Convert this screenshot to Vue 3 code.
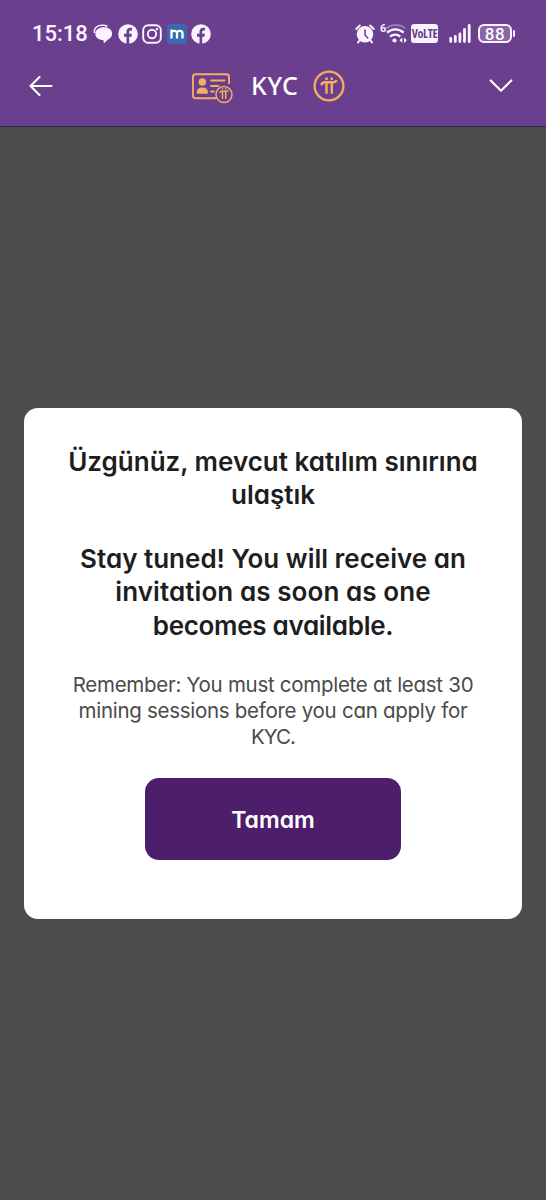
<script setup>
const title = [
  { text: 'Üzgünüz, mevcut katılım sınırına', fit: 'l1' },
  { text: 'ulaştık', fit: 'l2' },
]
const notice = [
  { text: 'Stay tuned! You will receive an', fit: 'l3' },
  { text: 'invitation as soon as one', fit: 'l4' },
  { text: 'becomes available.', fit: 'l5' },
]
const hint = [
  { text: 'Remember: You must complete at least 30', fit: 'l6' },
  { text: 'mining sessions before you can apply for', fit: 'l7' },
  { text: 'KYC.', fit: 'l8' },
]
</script>

<template>
  <div class="screen">
    <header class="top">
      <div class="status">
        <span class="time">15:18</span>
        <div class="notifs">
          <svg width="20" height="20" viewBox="0 0 20 20">
            <path d="M1.600 9C.3 4.500 4 1.500 8.500 1.300c2.500-.1 4.500.3 6 1.200" fill="none" stroke="#fbf3ff" stroke-width="1.500" />
            <path d="M10.800 3.300c4.800 0 8.300 2.700 8.300 6.400 0 2.600-1.600 4.600-4.100 5.700L11 19.300l-.8-3.300C5.600 15.900 2.300 13.400 2.300 9.700 2.300 6 6.100 3.300 10.800 3.300z" fill="#fbf3ff" />
          </svg>
          <svg width="20" height="20" viewBox="0 0 20 20">
            <circle cx="10" cy="10" r="9.800" fill="#fbf3ff" />
            <path d="M8.500 20v-7.300H6V9.800h2.500V7.700c0-2.600 1.500-3.900 3.800-3.900.8 0 1.700.2 1.700.2v2.400h-1.200c-1.200 0-1.600.7-1.600 1.500v1.900h2.700l-.4 2.900h-2.300V20z" fill="#6a3f8d" />
          </svg>
          <svg width="20" height="20" viewBox="0 0 20 20">
            <rect x="1.200" y="1.200" width="17.600" height="17.600" rx="5" fill="none" stroke="#fbf3ff" stroke-width="1.900" />
            <circle cx="10" cy="10" r="4.200" fill="none" stroke="#fbf3ff" stroke-width="1.900" />
            <circle cx="15" cy="5" r="1.200" fill="#fbf3ff" />
          </svg>
          <svg width="20" height="20" viewBox="0 0 20 20">
            <rect width="20" height="20" rx="3.500" fill="#3b69ad" />
            <path d="M4.500 14.500V5.500M4.500 9c0-3 5.500-3 5.500.3v5.200M10 9c0-3 5.500-3 5.500.3v5.200" fill="none" stroke="#fff" stroke-width="2.300" />
          </svg>
          <svg width="20" height="20" viewBox="0 0 20 20">
            <circle cx="10" cy="10" r="9.800" fill="#fbf3ff" />
            <path d="M8.500 20v-7.300H6V9.800h2.500V7.700c0-2.600 1.500-3.900 3.800-3.900.8 0 1.700.2 1.700.2v2.400h-1.200c-1.200 0-1.600.7-1.600 1.500v1.900h2.700l-.4 2.900h-2.300V20z" fill="#6a3f8d" />
          </svg>
        </div>
        <div class="system">
          <svg class="alarm" width="20" height="20" viewBox="0 0 20 20">
            <circle cx="10" cy="10.300" r="8.300" fill="#fbf3ff" />
            <path d="M1.300 5L4.800 1.500M18.700 5L15.200 1.500" stroke="#fbf3ff" stroke-width="2" stroke-linecap="round" />
            <path d="M4.500 16.500L3 18.500M15.500 16.500L17 18.500" stroke="#fbf3ff" stroke-width="2" stroke-linecap="round" />
            <path d="M10 6v5l2.800 3" fill="none" stroke="#6a3f8d" stroke-width="1.500" stroke-linecap="round" />
          </svg>
          <svg class="wifi" width="27" height="22" viewBox="0 0 27 22">
            <text x="0" y="9.500" class="gen">6</text>
            <path d="M6.500 6.300C11.500 1.800 20 1.800 25.300 6.300" fill="none" stroke="#a077be" stroke-width="2.100" />
            <path d="M7 10.600C12 6.300 19 6.300 23.600 10.600" fill="none" stroke="#fbf3ff" stroke-width="2.300" />
            <path d="M10 14.700C13 12 17.500 12 20.300 14.700" fill="none" stroke="#fbf3ff" stroke-width="2.300" />
            <circle cx="14.500" cy="18.500" r="2.100" fill="#fbf3ff" />
            <path d="M22.300 15.500v5.400l-2.800-2.700zM24 15.500v5.400l2.800-2.700z" fill="#fbf3ff" />
          </svg>
          <span class="volte">VoLTE</span>
          <svg class="signal" width="22" height="19" viewBox="0 0 22 19">
            <path d="M1.700 17.500v-3M6.300 17.500v-5M10.900 17.500v-7.500M15.500 17.500V5.500M20.200 17.500V1.500" stroke="#fbf3ff" stroke-width="2.800" stroke-linecap="round" />
          </svg>
          <span class="battery">88</span>
          <span class="nub"></span>
        </div>
      </div>
      <nav class="bar">
        <svg class="back" width="24" height="20" viewBox="0 0 24 20">
          <path d="M22.500 10H1.500M10.500 1L1.500 10l9 9" fill="none" stroke="#fff" stroke-width="2.100" stroke-linecap="round" stroke-linejoin="round" />
        </svg>
        <svg class="card-icon" width="42" height="32" viewBox="0 0 42 32">
          <g fill="none" stroke="#f2ae62" stroke-width="1.900">
            <path d="M24 26.300H3.500a2.500 2.500 0 0 1-2.500-2.500v-19A2.500 2.500 0 0 1 3.500 2.300h31a2.500 2.500 0 0 1 2.500 2.500V12" />
            <path d="M19 8.500h13.500M19 14h7.500M19 19.500h3" stroke-linecap="round" stroke-width="1.800" />
            <circle cx="32" cy="22.500" r="8" stroke-width="1.500" />
            <path d="M27.700 20.700c.4-1.500 1-1.500 2-1.500h5.200c1 0 1.200-.3 1.500-1M30.500 19.500v7.500M33.700 19.500v7.500M30.500 16.300v1.200M33.700 16.300v1.200" stroke-width="1.500" />
          </g>
          <circle cx="10.300" cy="10" r="3.800" fill="#f2ae62" />
          <path d="M4.800 21.800v-2.200c0-2.500 2-4.200 5.500-4.200s5.500 1.700 5.500 4.200v2.200z" fill="#f2ae62" />
        </svg>
        <h1 class="heading">KYC</h1>
        <svg class="coin" width="32" height="32" viewBox="0 0 32 32">
          <circle cx="16" cy="16" r="14.400" fill="none" stroke="#f2ae62" stroke-width="2.300" />
          <path d="M8.500 15.300c.3-2.500 1.500-3 3.200-3h8.600c1.600 0 2.600-.5 3.200-2.200M13.500 12.500v11.200M18.800 12.500v11.200" fill="none" stroke="#f2ae62" stroke-width="2.500" />
          <path d="M12.300 7.500h2.500v2.400h-2.500zM17.500 7.500H20v2.400h-2.500z" fill="#f2ae62" />
        </svg>
        <svg class="chevron" width="24" height="14" viewBox="0 0 24 14">
          <path d="M1.700 1.500L12 11.700 22.300 1.500" fill="none" stroke="#fff" stroke-width="2.200" stroke-linecap="round" stroke-linejoin="round" />
        </svg>
      </nav>
    </header>
    <main class="overlay">
      <section class="modal">
        <h2 class="strong"><span v-for="l in title" :key="l.fit" :class="l.fit">{{ l.text }}</span></h2>
        <h2 class="strong second"><span v-for="l in notice" :key="l.fit" :class="l.fit">{{ l.text }}</span></h2>
        <p class="hint"><span v-for="l in hint" :key="l.fit" :class="l.fit">{{ l.text }}</span></p>
        <button class="ok">Tamam</button>
      </section>
    </main>
  </div>
</template>

<style>
body { margin: 0; background: #4c4c4c; }
</style>

<style scoped>
.screen { width: 546px; height: 1200px; display: flex; flex-direction: column; background: #4c4c4c; overflow: hidden; }
svg { display: block; flex: none; }
.top { height: 127px; box-sizing: border-box; background: #6a3f8d; border-bottom: 1px solid #38234a; flex: none; }
.status { display: flex; height: 58px; padding: 10px 30px 0 32px; box-sizing: border-box; align-items: center; }
.time { width: 61px; font: 500 22px/22px Roboto, sans-serif; color: #fbf3ff; letter-spacing: 0; }
.notifs { display: flex; gap: 4.600px; margin-top: -1px; }
.system { display: flex; align-items: center; margin-left: auto; margin-top: -1px; }
.wifi { margin-left: 5px; margin-top: -1px; }
.gen { font: 700 11px Roboto, sans-serif; fill: #fbf3ff; }
.volte { margin-left: 4px; width: 27px; height: 19px; border-radius: 3px; background: #fbf3ff; color: #6a3f8d; font: 700 12px/19px "Open Sans", sans-serif; font-stretch: 75%; letter-spacing: -0.3px; text-align: center; }
.signal { margin-left: 11px; }
.battery { margin-left: 7px; width: 34px; height: 19px; box-sizing: border-box; border: 2px solid #fbf3ff; border-radius: 6px; background: #8a65a8; color: #fff; font: 500 17px/16px Roboto, sans-serif; text-align: center; letter-spacing: 0.5px; }
.nub { width: 2px; height: 7px; margin-left: 1px; margin-right: 1px; background: #fbf3ff; border-radius: 1px; }
.bar { display: flex; align-items: center; height: 56px; padding: 0 33px 0 29px; }
.card-icon { margin-left: 139px; margin-top: 3px; }
.heading { margin: -3px 0 0 17px; width: 61.500px; font: 500 25px/30px "Noto Sans", sans-serif; letter-spacing: 0.600px; color: #fff; }
.chevron { margin-left: auto; }
.overlay { flex: 1; display: flex; flex-direction: column; align-items: center; padding-top: 281px; }
.modal { width: 498px; height: 511px; box-sizing: border-box; padding: 36.800px 0 0; border-radius: 14px; background: #fff; display: flex; flex-direction: column; align-items: center; font-family: Inter, sans-serif; font-feature-settings: "cv11"; }
.strong, .hint { margin: 0; display: flex; flex-direction: column; align-items: center; white-space: nowrap; }
.strong { font-size: 26px; line-height: 33.500px; font-weight: 600; color: #1e1e1e; }
.second { margin-top: 30px; }
.l4 { letter-spacing: 0.080px; }
.l5 { letter-spacing: -0.300px; }
.hint { margin-top: 29.500px; font-size: 20.500px; line-height: 26px; font-weight: 400; color: #4a4a4a; letter-spacing: -0.280px; }
.l8 { letter-spacing: -1px; }
.ok { margin-top: 28.200px; width: 256px; height: 82px; padding: 2px 0 0; border: 0; border-radius: 14px; background: #4d1e6c; color: #fff; font: 600 23px/28px Inter, sans-serif; font-feature-settings: "cv11"; }
</style>
